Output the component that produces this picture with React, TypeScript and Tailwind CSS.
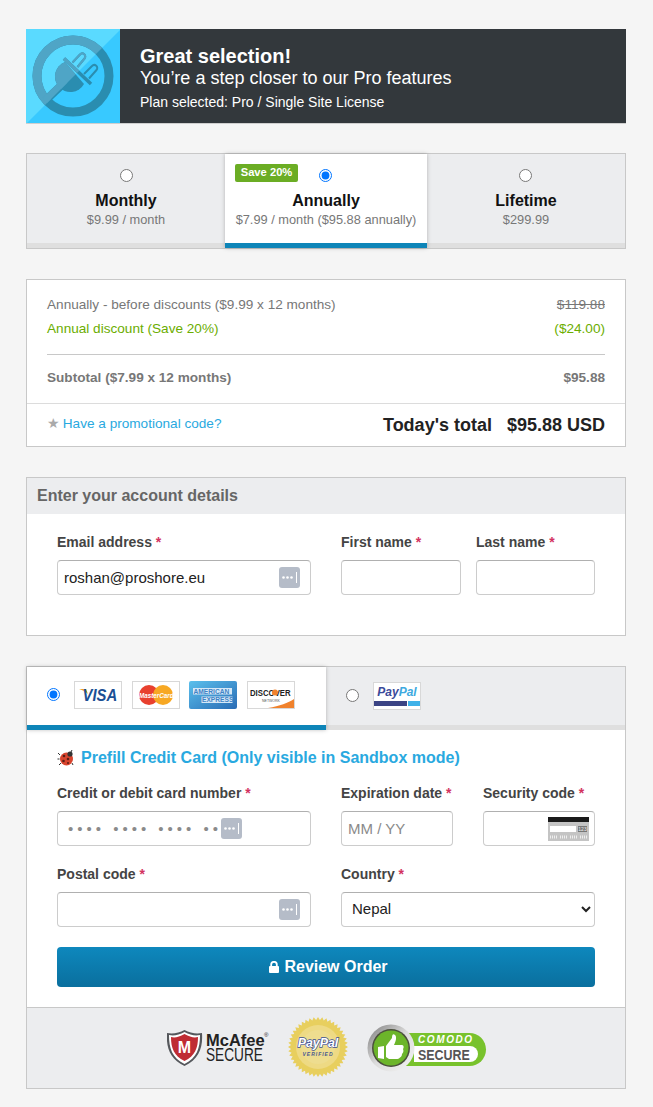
import React from 'react';

const FONT = 'Liberation Sans';

const Req = () => <span className="text-[#d3335f]"> *</span>;

const KeyIcon = ({ className = '' }: { className?: string }) => (
  <svg viewBox="0 0 21 21" className={`w-[21px] h-[21px] ${className}`}>
    <rect width="21" height="21" rx="3" fill="#b5bcc8" />
    <circle cx="4.5" cy="10.5" r="1.3" fill="#fff" />
    <circle cx="8.5" cy="10.5" r="1.3" fill="#fff" />
    <circle cx="12.5" cy="10.5" r="1.3" fill="#fff" />
    <rect x="17" y="5" width="1" height="11" fill="#fff" />
  </svg>
);

const PlugShape = ({ ring, fill }: { ring: string; fill: string }) => (
  <g>
    <circle cx="47" cy="47" r="36" fill="none" stroke={ring} strokeWidth="9" />
    <line x1="19" y1="72" x2="40" y2="52" stroke={fill} strokeWidth="8" />
    <path d="M39 33 A15.5 15.5 0 1 0 58 55 Z" fill={fill} />
    <line x1="38" y1="29.5" x2="65" y2="55" stroke={fill} strokeWidth="3.5" />
    <path d="M46.5 33.5 L54 25.5 A2.8 2.8 0 0 1 58.5 29.5 L51.5 38" fill="none" stroke={fill} strokeWidth="2" />
    <path d="M58 45 L66 37 A2.8 2.8 0 0 1 70.5 41 L63 49.5" fill="none" stroke={fill} strokeWidth="2" />
  </g>
);

const PlugLogo = () => (
  <div className="w-[94px] h-[94px] bg-[#38c9ff] shrink-0">
    <svg viewBox="0 0 94 94" className="w-[94px] h-[94px]">
      <defs>
        <clipPath id="lightHalf">
          <polygon points="0,0 95,0 0,95" />
        </clipPath>
      </defs>
      <polygon points="0,0 95,0 0,95" fill="#5adaff" />
      <PlugShape ring="#2a8db0" fill="#2a8db0" />
      <g clipPath="url(#lightHalf)">
        <PlugShape ring="#4fa5c6" fill="#4fa5c6" />
      </g>
    </svg>
  </div>
);

const Tab = ({
  title,
  price,
  active,
  save,
  radioClass = '',
}: {
  title: string;
  price: string;
  active?: boolean;
  save?: boolean;
  radioClass?: string;
}) => (
  <label
    className={`relative flex flex-col items-center pt-[15px] h-[94px] border-b-[5px] ${
      active
        ? 'w-[202px] bg-white border-[#0e85b8] shadow-[0_0_4px_rgba(0,0,0,0.25)] z-10'
        : 'w-[198px] bg-[#ecedef] border-[#dfdfdf]'
    }`}
  >
    {save && (
      <span className="absolute left-[10px] top-[10px] h-[18px] w-[63px] text-center rounded-[2px] bg-[#6bad24] text-white text-[11.2px] font-bold leading-[17px]">
        Save 20%
      </span>
    )}
    <input type="radio" name="billing" defaultChecked={active} className={`w-[13px] h-[13px] m-0 ${radioClass}`} />
    <span className="mt-[9px] text-[16px] leading-[19px] font-bold text-[#111]">{title}</span>
    <span className="mt-[2px] text-[12.8px] leading-[16px] text-[#777]">{price}</span>
  </label>
);

const Field = ({
  label,
  className = '',
  inputClass = 'px-[6px]',
  value,
  placeholder,
  children,
}: {
  label: string;
  className?: string;
  inputClass?: string;
  value?: string;
  placeholder?: string;
  children?: React.ReactNode;
}) => (
  <div className={className}>
    <div className="text-[14px] leading-[17px] font-bold text-[#444]">
      {label}
      <Req />
    </div>
    <div className="relative mt-[9px] h-[35px]">
      <input
        readOnly
        value={value}
        placeholder={placeholder}
        className={`w-full h-[35px] text-[15px] text-[#222] placeholder:text-[#8a8a8a] bg-white border border-[#ccc] border-t-[#b0b0b0] rounded-[4px] outline-none ${inputClass}`}
      />
      {children}
    </div>
  </div>
);

const Visa = () => (
  <div className="w-[48px] h-[28px] bg-white border border-[#d8d8d8]">
    <svg viewBox="0 0 46 26" className="w-[46px] h-[26px]">
      <path d="M4 7 H11 L13 12 C11 10 8 8 4 7Z" fill="#f2a51f" />
      <text transform="translate(7.5 19) scale(0.9 1)" fontSize="16.5" fontWeight="700" fontStyle="italic" fill="#1a4f94" fontFamily={FONT}>
        VISA
      </text>
    </svg>
  </div>
);

const MasterCard = () => (
  <div className="w-[48px] h-[28px] bg-white border border-[#d8d8d8]">
    <svg viewBox="0 0 46 26" className="w-[46px] h-[26px]">
      <circle cx="16" cy="13" r="10" fill="#e8402f" />
      <circle cx="30" cy="13" r="10" fill="#f7a823" />
      <text transform="translate(6 15.5) scale(0.9 1)" fontSize="7" fontStyle="italic" fontWeight="700" fill="#fff" fontFamily={FONT}>
        MasterCard
      </text>
    </svg>
  </div>
);

const Amex = () => (
  <div className="-ml-px w-[48px] h-[28px] rounded-[2px] bg-gradient-to-br from-[#5cc0ec] to-[#2a6cb5]">
    <svg viewBox="0 0 48 28" className="w-[48px] h-[28px]">
      <rect x="4" y="7" width="39" height="6.5" fill="#d5e8f7" />
      <rect x="12.5" y="15.5" width="31" height="6.5" fill="#d5e8f7" />
      <text transform="translate(4.5 12.8) scale(0.95 1)" fontSize="7" fontWeight="700" fill="#3f83c6" fontFamily={FONT}>
        AMERICAN
      </text>
      <text transform="translate(13 21.3) scale(0.95 1)" fontSize="7" fontWeight="700" fill="#3f83c6" fontFamily={FONT}>
        EXPRESS
      </text>
    </svg>
  </div>
);

const Discover = () => (
  <div className="w-[48px] h-[28px] bg-white border border-[#d8d8d8]">
    <svg viewBox="0 0 46 26" className="w-[46px] h-[26px]">
      <path d="M20 26 C32 24 40 21 46 17 V26Z" fill="#f0822d" />
      <text transform="translate(2 14) scale(0.82 1)" fontSize="9.5" fontWeight="700" fill="#222" fontFamily={FONT}>
        DISCOVER
      </text>
      <circle cx="27" cy="10.5" r="3" fill="#f0822d" />
      <text x="23" y="19.5" textAnchor="middle" fontSize="3.5" fill="#555" fontFamily={FONT}>
        NETWORK
      </text>
    </svg>
  </div>
);

const PayPalCard = () => (
  <div className="w-[48px] h-[28px] bg-white border border-[#d8d8d8] flex flex-col items-center">
    <span className="mt-[2px] text-[12px] leading-[14px] font-bold italic text-[#3b4a9a]">
      Pay<span className="text-[#3da9e0]">Pal</span>
    </span>
    <div className="mt-[2px] flex gap-[1px] w-full">
      <div className="h-[5px] w-[33px] bg-[#3b4484]" />
      <div className="h-[5px] flex-1 bg-[#3fb1e8]" />
    </div>
  </div>
);

const Ladybug = () => (
  <svg viewBox="0 0 18 18" className="w-[18px] h-[18px]">
    <g stroke="#333" strokeWidth="1">
      <line x1="3" y1="6" x2="1" y2="4" />
      <line x1="2.5" y1="10" x2="0.5" y2="10" />
      <line x1="4" y1="14" x2="2" y2="16" />
      <line x1="14" y1="3" x2="15" y2="1" />
      <line x1="15" y1="14" x2="16" y2="16" />
    </g>
    <circle cx="9.5" cy="10" r="6.5" fill="#d8442e" />
    <circle cx="13" cy="5" r="2.6" fill="#333" />
    <circle cx="7" cy="7" r="1.3" fill="#5a1d14" />
    <circle cx="11" cy="10" r="1.3" fill="#5a1d14" />
    <circle cx="6.5" cy="12" r="1.3" fill="#5a1d14" />
    <circle cx="11" cy="14" r="1" fill="#5a1d14" />
  </svg>
);

const CvcIcon = () => (
  <svg viewBox="0 0 41 24" className="absolute right-[6px] top-[6px] w-[41px] h-[24px]">
    <rect width="41" height="24" fill="#c4c4c4" />
    <rect width="41" height="5" fill="#1a1a1a" />
    <rect x="2" y="9" width="26" height="6" fill="#fff" />
    <rect x="30" y="9" width="9" height="6" fill="#777" />
    <text x="34.5" y="14" textAnchor="middle" fontSize="5" fill="#eee" fontFamily={FONT}>123</text>
    <line x1="2" y1="20" x2="39" y2="20" stroke="#eee" strokeWidth="3" strokeDasharray="1 1 1 1 1 1 1 3" />
  </svg>
);

const McAfee = () => (
  <svg viewBox="0 0 102 36" className="w-[102px] h-[36px]">
    <path d="M17.5 0 C23 3 29 4 35 3 C36 18 32 29 17.5 36 C3 29 -1 18 0 3 C6 4 12 3 17.5 0Z" fill="#55585c" />
    <path d="M17.5 2 C23 5 28 6 33 5 C33 18 30 28 17.5 34 C5 28 2 18 2 5 C7 6 12 5 17.5 2Z" fill="#fff" />
    <path d="M17.5 4 C23 7 27 8 31 7 C31 18 28 26 17.5 31 C7 26 4 18 4 7 C8 8 12 7 17.5 4Z" fill="#bf2c33" />
    <text x="17.5" y="23" textAnchor="middle" fontSize="16" fontWeight="700" fill="#fff" fontFamily={FONT}>M</text>
    <text transform="translate(39 16) scale(0.97 1)" fontSize="17" fontWeight="700" fill="#222" fontFamily={FONT}>McAfee</text>
    <text x="97" y="7" fontSize="6" fill="#222" fontFamily={FONT}>®</text>
    <text transform="translate(39 31) scale(0.76 1)" fontSize="18" fill="#222" fontFamily={FONT}>SECURE</text>
  </svg>
);

const teeth = Array.from({ length: 44 }, (_, i) => {
  const a = (i / 44) * Math.PI * 2;
  const b = ((i + 0.5) / 44) * Math.PI * 2;
  return `${30 + 30 * Math.cos(a)},${30 + 30 * Math.sin(a)} ${30 + 27 * Math.cos(b)},${30 + 27 * Math.sin(b)}`;
}).join(' ');

const PayPalSeal = () => (
  <svg viewBox="0 0 60 60" className="w-[60px] h-[60px] -mt-[2px]">
    <polygon points={teeth} fill="#e8cf5e" />
    <circle cx="30" cy="30" r="22" fill="#eeda84" />
    <circle cx="30" cy="30" r="17" fill="#eedd8f" />
    <text transform="translate(30 29.5) scale(0.95 1)" textAnchor="middle" fontSize="13" fontWeight="700" fontStyle="italic" fill="#fff" stroke="#3b4d94" strokeWidth="1.4" paintOrder="stroke" fontFamily={FONT}>
      PayPal
    </text>
    <text x="30" y="39" textAnchor="middle" fontSize="5" fontWeight="700" fontStyle="italic" letterSpacing="1" fill="#4a5a90" fontFamily={FONT}>
      VERIFIED
    </text>
  </svg>
);

const Comodo = () => (
  <svg viewBox="0 0 120 48" className="w-[120px] h-[48px]">
    <defs>
      <linearGradient id="bezel" x1="0" y1="0" x2="1" y2="1">
        <stop offset="0" stopColor="#7c7c7c" />
        <stop offset="0.5" stopColor="#dcdcdc" />
        <stop offset="1" stopColor="#f4f4f4" />
      </linearGradient>
    </defs>
    <rect x="24" y="9" width="95" height="33" rx="16.5" fill="#78c22c" />
    <path d="M47 22 H103 A8 8 0 0 1 103 38 H47Z" fill="#fff" />
    <text x="51" y="19" fontSize="10" fontWeight="700" fontStyle="italic" letterSpacing="1.6" fill="#fff" fontFamily={FONT}>
      COMODO
    </text>
    <text transform="translate(51 35.5) scale(0.83 1)" fontSize="15" fontWeight="700" fill="#555" fontFamily={FONT}>
      SECURE
    </text>
    <circle cx="24" cy="24" r="23.5" fill="url(#bezel)" />
    <circle cx="24" cy="24" r="19" fill="#4a4f3c" />
    <circle cx="24" cy="24" r="17.5" fill="#6cb52a" />
    <path d="M11 23 L17 22 V35 L11 34Z" fill="#fff" />
    <path d="M19 22 L25 14 C25 11 26 9 28 11 C30 13 29 17 27 21 H35 C37 21 37 24 36 25 C37 27 36 29 35 30 C35 32 34 33 33 33.5 C32 35 31 35 29 35 H22 L19 33Z" fill="#fff" />
  </svg>
);

export default function App() {
  return (
    <div className="min-h-[1107px] bg-[#f5f5f5] pl-[26px] pr-[27px] pt-[29px] pb-[18px] font-['Liberation_Sans',Arial,sans-serif]">
      {/* Banner */}
      <div className="flex h-[94px] bg-[#33383c] shadow-[0_1px_0_#cfcfcf] text-white">
        <PlugLogo />
        <div className="pl-[20px] pt-[16px]">
          <div className="text-[20px] leading-[23px] font-bold">Great selection!</div>
          <div className="text-[18px] leading-[21px]">You’re a step closer to our Pro features</div>
          <div className="mt-[5px] text-[14px] leading-[16px]">Plan selected: Pro / Single Site License</div>
        </div>
      </div>

      {/* Billing cycle */}
      <div className="mt-[30px] h-[96px] flex border border-[#c8c8c8] bg-[#ecedef]">
        <Tab title="Monthly" price="$9.99 / month" />
        <Tab title="Annually" price="$7.99 / month ($95.88 annually)" active save radioClass="-translate-x-px" />
        <Tab title="Lifetime" price="$299.99" radioClass="-translate-x-px" />
      </div>

      {/* Summary */}
      <div className="mt-[30px] h-[168px] bg-white border border-[#c8c8c8] flex flex-col">
        <div className="flex-1 px-[20px] pt-[17px] text-[13.6px] leading-[16px]">
          <div className="flex justify-between text-[#777]">
            <span>Annually - before discounts ($9.99 x 12 months)</span>
            <span className="line-through">$119.88</span>
          </div>
          <div className="mt-[8px] flex justify-between text-[#6bad00]">
            <span>Annual discount (Save 20%)</span>
            <span>($24.00)</span>
          </div>
          <div className="mt-[17px] pt-[15px] border-t border-[#c8c8c8] flex justify-between font-bold text-[#777]">
            <span>Subtotal ($7.99 x 12 months)</span>
            <span>$95.88</span>
          </div>
        </div>
        <div className="h-[43px] border-t border-[#dcdcdc] px-[20px] flex items-center justify-between">
          <div className="text-[13.6px] pb-[1px]">
            <span className="text-[#aaa] tracking-[-0.5px]">★ </span>
            <span className="text-[#29a9e0]">Have a promotional code?</span>
          </div>
          <div className="text-[18px] font-bold text-[#222] flex gap-[15px]">
            <span>Today's total</span>
            <span>$95.88 USD</span>
          </div>
        </div>
      </div>

      {/* Account */}
      <div className="mt-[30px] h-[159px] bg-white border border-[#c8c8c8]">
        <div className="h-[36px] bg-[#ecedef] px-[10px] text-[16px] leading-[35px] font-bold text-[#666]">
          Enter your account details
        </div>
        <div className="px-[30px] pt-[20px] flex">
          <Field label="Email address" value="roshan@proshore.eu" className="w-[254px]">
            <KeyIcon className="absolute right-[11px] top-[7px]" />
          </Field>
          <Field label="First name" className="w-[120px] ml-[30px]" />
          <Field label="Last name" className="w-[119px] ml-[15px]" />
        </div>
      </div>

      {/* Payment */}
      <div className="mt-[30px] h-[423px] bg-white border border-[#c8c8c8] flex flex-col">
        <div className="flex h-[63px] bg-[#ecedef] border-b-[5px] border-[#dfdfdf]">
          <div className="relative z-10 w-[299px] h-[63px] bg-white border-b-[5px] border-[#0e85b8] shadow-[0_0_4px_rgba(0,0,0,0.25)] flex items-center pl-[20px] pb-[3px]">
            <input type="radio" name="pay" defaultChecked className="w-[13px] h-[13px] m-0" />
            <div className="ml-[14px] flex gap-[10px]">
              <Visa />
              <MasterCard />
              <Amex />
              <Discover />
            </div>
          </div>
          <div className="flex items-center pl-[20px] pb-[1px]">
            <input type="radio" name="pay" className="w-[13px] h-[13px] m-0" />
            <div className="ml-[14px]">
              <PayPalCard />
            </div>
          </div>
        </div>

        <div className="flex-1 px-[30px] pt-[18px]">
          <div className="flex items-center gap-[6px] text-[16px] leading-[19px] font-bold text-[#29a9e0]">
            <Ladybug />
            <span>Prefill Credit Card (Only visible in Sandbox mode)</span>
          </div>
          <div className="mt-[18px] flex">
            <Field
              label="Credit or debit card number"
              placeholder="•••• •••• •••• ••••"
              inputClass="pl-[10px] pr-[6px] tracking-[4px]"
              className="w-[254px]"
            >
              <KeyIcon className="absolute left-[164px] top-[7px]" />
            </Field>
            <Field label="Expiration date" placeholder="MM / YY" className="w-[112px] ml-[30px]" />
            <Field label="Security code" className="w-[112px] ml-[30px]">
              <CvcIcon />
            </Field>
          </div>
          <div className="mt-[20px] flex">
            <Field label="Postal code" className="w-[254px]">
              <KeyIcon className="absolute right-[11px] top-[7px]" />
            </Field>
            <div className="w-[254px] ml-[30px]">
              <div className="text-[14px] leading-[17px] font-bold text-[#444]">
                Country
                <Req />
              </div>
              <select
                defaultValue="Nepal"
                className="mt-[9px] w-full h-[35px] px-[6px] pb-[2px] text-[15px] text-[#222] bg-white border border-[#ccc] border-t-[#b0b0b0] rounded-[4px] outline-none appearance-auto"
              >
                <option>Nepal</option>
              </select>
            </div>
          </div>
          <button className="mt-[20px] w-full h-[40px] pl-[5px] rounded-[4px] bg-gradient-to-b from-[#0e88bd] to-[#0a6f9e] text-white text-[16px] font-bold flex items-center justify-center gap-[5px]">
            <svg viewBox="0 0 10 12" className="w-[10px] h-[12px]">
              <path d="M2.2 6V3.6a2.8 2.8 0 0 1 5.6 0V6" fill="none" stroke="#fff" strokeWidth="1.8" />
              <rect x="0" y="5" width="10" height="7" rx="1" fill="#fff" />
            </svg>
            Review Order
          </button>
        </div>

        <div className="h-[81px] bg-[#ecedef] border-t border-[#c8c8c8] flex items-center justify-center gap-[19px] pl-[2px]">
          <McAfee />
          <PayPalSeal />
          <Comodo />
        </div>
      </div>
    </div>
  );
}
